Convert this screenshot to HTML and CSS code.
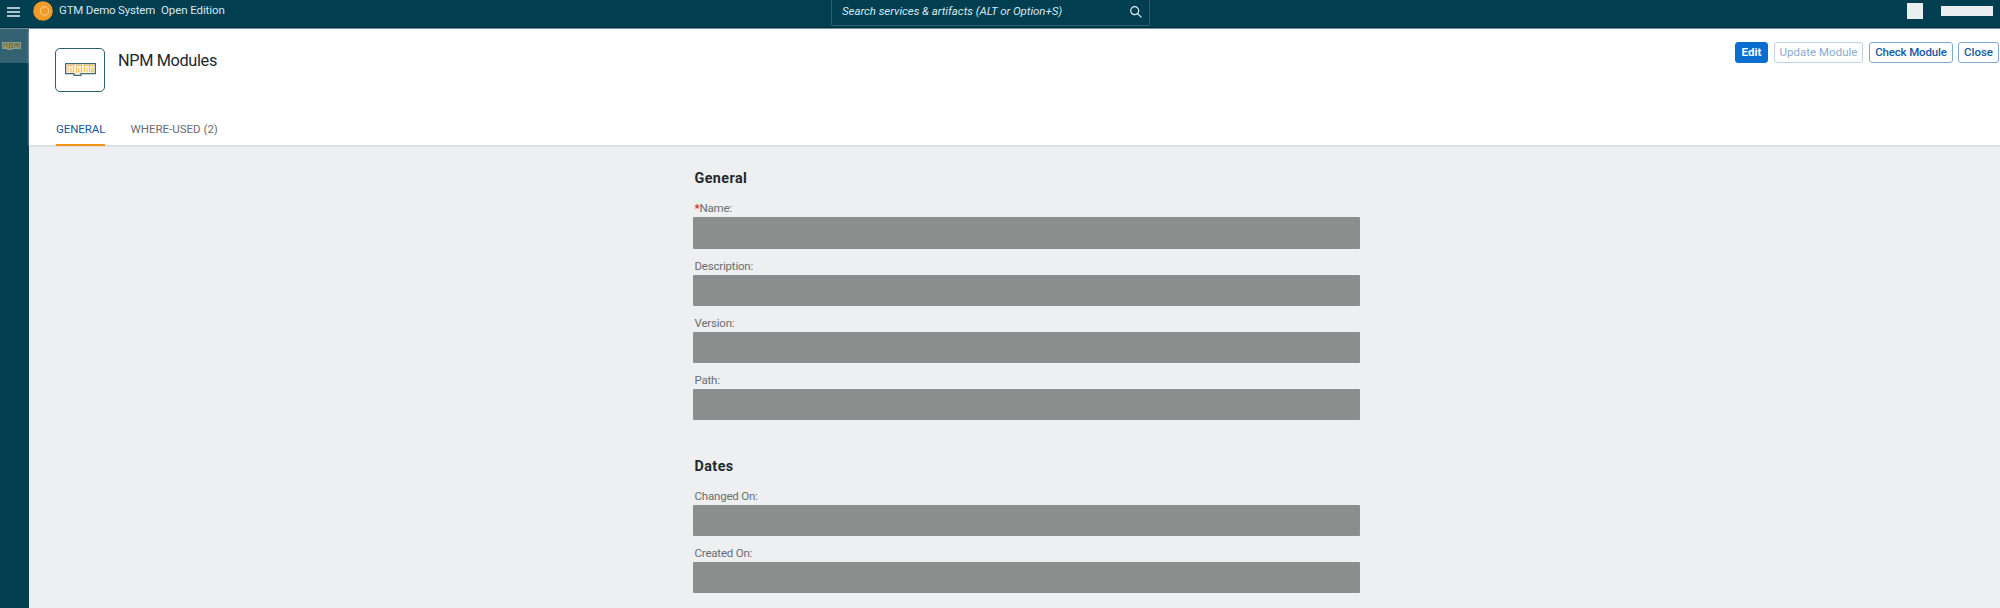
FILE: index.html
```html
<!DOCTYPE html>
<html lang="en">
<head>
<meta charset="utf-8">
<title>NPM Modules</title>
<link rel="stylesheet" href="styles.css">
</head>
<body>
<header class="shell">
  <svg class="menu" viewBox="0 0 13 10" width="13" height="10"><path d="M0 1h13M0 5h13M0 9h13"/></svg>
  <svg class="logo" viewBox="0 0 20 20" width="20" height="20"><circle class="disc" cx="10" cy="10" r="9.8"/><circle class="ring" cx="11.5" cy="10" r="4.2"/></svg>
  <span class="system">GTM Demo System</span>
  <span class="edition">Open Edition</span>
  <div class="search">
    <span class="placeholder">Search services &amp; artifacts (ALT or Option+S)</span>
    <svg class="lens" viewBox="0 0 12 12" width="12" height="12"><circle cx="4.7" cy="4.7" r="4"/><path d="M7.6 7.6l3.8 3.8"/></svg>
  </div>
  <div class="block avatar"></div>
  <div class="block user"></div>
</header>
<div class="body">
  <nav class="side">
    <div class="side-item">
      <svg viewBox="0 0 31 13" width="19" height="8"><path class="side-outline" d="M.5.5h30v10H16v2H9v-2H.5z"/><path class="side-letters" d="M3 9V3h5v6M12 11V3h5v6h-3M21 9V3h7v6M24.5 4v5"/></svg>
    </div>
  </nav>
  <main class="main">
    <section class="page-head">
      <div class="head-row">
        <div class="icon-box">
          <svg viewBox="0 0 31 13" width="31" height="13"><path class="npm-outline" d="M.6.6h29.8v10H16v1.8H9v-1.8H.6z"/><path class="npm-letters" d="M3 9V2.5h5.5V9H6V5M11.5 10.5v-8h5V9h-3V5M19.5 9V2.5h8.5V9h-1.5V5M22 9V5M24.500 9V3"/></svg>
        </div>
        <h1 class="title">NPM Modules</h1>
        <div class="actions">
          <button class="btn edit">Edit</button>
          <button class="btn update" disabled>Update Module</button>
          <button class="btn check">Check Module</button>
          <button class="btn close">Close</button>
        </div>
      </div>
      <div class="tabs">
        <div class="tab active">GENERAL</div>
        <div class="tab used">WHERE-USED (2)</div>
      </div>
    </section>
    <section class="form">
      <h2 class="group">General</h2>
      <label class="label name"><b class="req">*</b>Name:</label><div class="field tall"></div>
      <label class="label">Description:</label><div class="field"></div>
      <label class="label">Version:</label><div class="field"></div>
      <label class="label">Path:</label><div class="field"></div>
      <h2 class="group dates">Dates</h2>
      <label class="label">Changed On:</label><div class="field"></div>
      <label class="label">Created On:</label><div class="field"></div>
    </section>
  </main>
</div>
</body>
</html>
```
FILE: styles.css
```css
* { box-sizing: border-box; }
body {
  margin: 0;
  height: 608px;
  overflow: hidden;
  background: #edeff0;
  color: #22282d;
  font-family: Roboto, sans-serif;
  font-size: 11.5px;
}
.shell {
  display: flex;
  align-items: flex-start;
  height: 29px;
  background: #003e50;
  border-bottom: 1px solid #6f909b;
  box-shadow: inset 0 -1px #002c40;
  color: #d5e8f3;
  white-space: nowrap;
}
.menu { margin: 7px 0 0 7px; fill: none; stroke: #e3f0f6; stroke-width: 1.4; }
.logo { margin: 1px 0 0 13px; }
.disc { fill: #f39b27; }
.ring { fill: none; stroke: #ffd596; stroke-width: 1; }
.system { width: 95px; margin: 0 0 0 6px; line-height: 20px; letter-spacing: -.18px; }
.edition { width: 64px; margin-left: 7px; line-height: 20px; letter-spacing: -.1px; }
.search {
  display: flex;
  width: 319px;
  height: 26px;
  margin-left: 606px;
  border: 1px solid #335f74;
  border-top: 0;
  border-radius: 0 0 2px 2px;
}
.placeholder { width: 287px; padding-left: 10px; line-height: 23px; font-style: italic; letter-spacing: -.06px; }
.lens { margin: 6px 0 0 10.5px; fill: none; stroke: #e3f0f6; stroke-width: 1.2; }
.block { background: #ebeeef; }
.avatar { width: 16px; height: 16px; margin: 3px 0 0 757px; }
.user { width: 52px; height: 10px; margin: 6px 0 0 18px; }
.body { display: flex; height: 579px; }
.side { width: 29px; background: #003e50; }
.side-item { display: flex; height: 34px; padding: 13px 0 0 2px; background: #346273; }
.side-outline { fill: #a49a55; stroke: #83a2a0; stroke-width: 1.6; }
.side-letters { fill: none; stroke: #5f7158; stroke-width: 1.8; }
.main { flex: 1; }
.page-head {
  height: 116px;
  background: #fff;
  box-shadow: 0 1px 2px #d0d3d5;
}
.head-row { display: flex; height: 97px; padding-left: 26px; }
.icon-box {
  display: flex;
  align-items: center;
  justify-content: center;
  width: 50px;
  height: 44px;
  margin-top: 18.5px;
  border: 1.5px solid #2b5f6d;
  border-radius: 5px;
}
.npm-outline { fill: #fff2d8; stroke: #3d6971; stroke-width: 1.2; }
.npm-letters { fill: none; stroke: #f5bd60; stroke-width: 1; }
.title { margin: 20px 0 0 13px; font-size: 16.3px; font-weight: 400; line-height: 24px; letter-spacing: -.35px; }
.actions { display: flex; margin: 13px 1px 0 auto; }
.btn {
  height: 21px;
  margin: 0 0 0 6px;
  padding: 0;
  border: 1px solid #80a8d3;
  border-radius: 3px;
  background: #fff;
  color: #1659a0;
  font: 500 11.5px/19px Roboto, sans-serif;
  white-space: nowrap;
}
.edit { width: 33px; background: #0a6ed1; border-color: #0a6ed1; color: #fff; font-weight: 700; }
.update { width: 89px; border-color: #bfd2e8; color: #8cabd0; font-weight: 400; letter-spacing: .02px; }
.check { width: 84px; letter-spacing: -.15px; }
.close { width: 41px; margin-left: 5px; }
.tabs { display: flex; height: 34px; margin-top: -14px; padding-left: 27px; line-height: 35px; color: #6a6d70; }
.tab { width: 90px; height: 34px; margin-right: 25.5px; white-space: nowrap; }
.tab.active { width: 49px; color: #1659a0; border-bottom: 2px solid #f39119; letter-spacing: -.08px; }
.form { width: 667px; margin-left: 664px; padding-top: 20px; }
.group { height: 26px; margin: 0; padding-left: 1.5px; font-size: 14.3px; font-weight: 700; line-height: 26px; letter-spacing: .45px; }
.label { display: block; height: 26px; padding: 7px 0 0 1.5px; line-height: 20px; color: #6a6d70; letter-spacing: -.2px; }
.req { color: #d42c38; }
.field { height: 31px; border-radius: 1px; background: #8c8e8d; }
.tall { height: 32px; }
.dates { height: 26px; margin-top: 33px; }
```
